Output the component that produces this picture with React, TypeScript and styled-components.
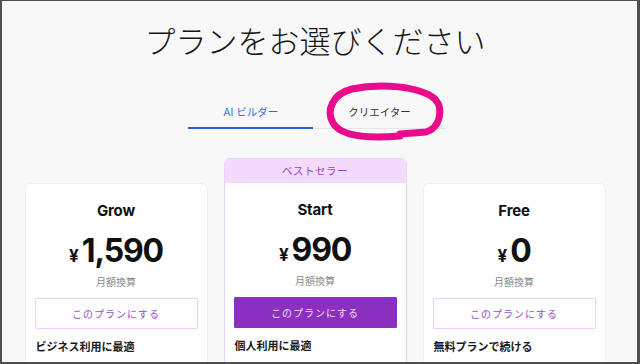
import styled, { createGlobalStyle } from 'styled-components';

const GlobalStyle = createGlobalStyle`
  * {
    box-sizing: border-box;
  }

  body {
    margin: 0;
    background: #f8f8f8;
    font-family: Inter, "Noto Sans CJK JP", sans-serif;
    color: #111;
  }
`;

const Frame = styled.div`
  position: relative;
  width: 640px;
  height: 364px;
  overflow: hidden;
  background: #f8f8f8;
  border-style: solid;
  border-color: #4f4f4f;
  border-width: 1px 3px 2px 2px;
`;

const Page = styled.main`
  display: flex;
  flex-direction: column;
  align-items: center;
  padding: 19px 9px 0 0;
`;

const Title = styled.h1`
  margin: 0;
  font-family: "Noto Sans CJK JP", sans-serif;
  font-size: 31px;
  font-weight: 300;
  line-height: 40px;
  color: #151515;
`;

const Tabs = styled.nav`
  display: flex;
  margin: 37px 0 0 4px;
  border-bottom: 1px solid #e6e6e6;
`;

const Tab = styled.a<{ $active?: boolean }>`
  display: block;
  margin-bottom: -1px;
  padding: 8px 35px 6px;
  font-family: Inter, "Noto Sans CJK JP", sans-serif;
  font-size: 10.5px;
  line-height: 16px;
  color: ${({ $active }) => ($active ? '#3868e6' : '#333')};
  border-bottom: 2px solid ${({ $active }) => ($active ? '#2a5fe3' : 'transparent')};
  text-decoration: none;
`;

const Plans = styled.ul`
  display: grid;
  grid-template-columns: repeat(3, 183px);
  gap: 16px;
  align-items: start;
  margin: 29px 0 0;
  padding: 0;
  list-style: none;
`;

const Card = styled.li<{ $featured?: boolean }>`
  display: flex;
  flex-direction: column;
  height: 240px;
  margin-top: ${({ $featured }) => ($featured ? '0' : '25px')};
  background: #fff;
  border: 1px solid ${({ $featured }) => ($featured ? '#ecd2fa' : '#efefef')};
  border-radius: 6px;
  overflow: hidden;
`;

const Badge = styled.div`
  height: 24px;
  background: #f4dafd;
  color: #9b3fcc;
  font-family: "Noto Sans CJK JP", sans-serif;
  font-size: 10.5px;
  line-height: 24px;
  text-align: center;
  letter-spacing: 0.5px;
`;

const CardBody = styled.div`
  display: flex;
  flex-direction: column;
  padding: 18px 9px 0;
`;

const PlanName = styled.h2`
  margin: 0;
  font-size: 15px;
  font-weight: 700;
  line-height: 18px;
  text-align: center;
  letter-spacing: -0.2px;
`;

const Price = styled.div`
  display: flex;
  justify-content: center;
  align-items: baseline;
  gap: 3px;
  height: 33px;
  margin-top: 15px;
`;

const Yen = styled.span`
  font-size: 17px;
  font-weight: 700;
  line-height: 1;
`;

const Amount = styled.span`
  font-size: 32px;
  font-weight: 700;
  line-height: 1;
  letter-spacing: -1.2px;
`;

const Note = styled.div`
  margin-top: 7px;
  font-family: "Noto Sans CJK JP", sans-serif;
  font-size: 10px;
  line-height: 14px;
  color: #8a8a8a;
  text-align: center;
`;

const PlanButton = styled.button<{ $primary?: boolean }>`
  height: 31px;
  margin-top: 9px;
  font-family: "Noto Sans CJK JP", sans-serif;
  font-size: 10px;
  letter-spacing: 1px;
  color: ${({ $primary }) => ($primary ? '#efdff7' : '#9a4fc4')};
  background: ${({ $primary }) => ($primary ? '#8a2fbf' : '#fff')};
  border: 1px solid ${({ $primary }) => ($primary ? '#8a2fbf' : '#ecd0fb')};
  border-radius: 1px;
  cursor: pointer;
`;

const Feature = styled.p`
  margin: 9px 0 0 1px;
  font-family: "Noto Sans CJK JP", sans-serif;
  font-size: 11px;
  font-weight: 700;
  line-height: 16px;
  color: #1a1a1a;
`;

const Scribble = styled.svg`
  position: absolute;
  left: 0;
  top: 0;
  pointer-events: none;
`;

const plans = [
  { id: 'grow', name: 'Grow', price: '1,590', feature: 'ビジネス利用に最適' },
  { id: 'start', name: 'Start', price: '990', feature: '個人利用に最適', featured: true },
  { id: 'free', name: 'Free', price: '0', feature: '無料プランで続ける' },
];

const App = () => {
  return (
    <Frame>
      <GlobalStyle />
      <Page>
        <Title>プランをお選びください</Title>
        <Tabs>
          <Tab href="#" $active>
            AI ビルダー
          </Tab>
          <Tab href="#">クリエイター</Tab>
        </Tabs>
        <Plans>
          {plans.map(({ id, name, price, feature, featured }) => (
            <Card key={id} $featured={featured}>
              {featured && <Badge>ベストセラー</Badge>}
              <CardBody>
                <PlanName>{name}</PlanName>
                <Price>
                  <Yen>¥</Yen>
                  <Amount>{price}</Amount>
                </Price>
                <Note>月額換算</Note>
                <PlanButton $primary={featured}>このプランにする</PlanButton>
                <Feature>{feature}</Feature>
              </CardBody>
            </Card>
          ))}
        </Plans>
      </Page>
      <Scribble width="640" height="364" viewBox="0 0 640 364">
        <path
          d="M398 133 L424 131 C438 127 442 108 433 98 C418 85 378 82 350 88 C330 93 324 110 331 122 C338 134 362 138 398 135"
          fill="none"
          stroke="#ea0a8c"
          strokeWidth="7"
          strokeLinecap="round"
          strokeLinejoin="round"
        />
      </Scribble>
    </Frame>
  );
};

export default App;
